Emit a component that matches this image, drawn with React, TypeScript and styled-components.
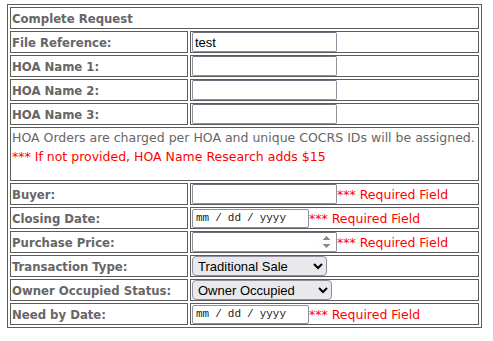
import React from 'react';
import styled, { createGlobalStyle, css } from 'styled-components';

const GlobalStyle = createGlobalStyle`
  body {
    margin: 4px 7px;
    background: #fff;
    font-family: "DejaVu Sans", Verdana, sans-serif;
  }
`;

const FormTable = styled.table`
  width: 475px;
  table-layout: fixed;
  border: 1px solid #5c5c5c;
  border-spacing: 2px;
  color: #666;
`;

const Cell = styled.td`
  border: 1px solid #5c5c5c;
  padding: 0 1px;
  height: 20px;
  vertical-align: middle;
`;

const Label = styled(Cell)`
  font-family: "DejaVu Sans Condensed", "DejaVu Sans", sans-serif;
  font-stretch: condensed;
  font-weight: bold;
  font-size: 13px;
  white-space: nowrap;
`;

const Note = styled(Cell)`
  height: auto;
  padding: 0 1px 14px;
  font-size: 12.5px;
  line-height: 19px;
  vertical-align: top;
  white-space: nowrap;
`;

const Field = styled.div`
  display: flex;
  align-items: center;
  height: 20px;
`;

const Required = styled.span`
  color: #f00;
  font-size: 12.5px;
  white-space: nowrap;
`;

const RedLine = styled.div`
  color: #f00;
`;

const control = css`
  box-sizing: border-box;
  margin: 0;
  font-family: "Liberation Sans", Arial, sans-serif;
  font-size: 13px;
  color: #000;
`;

const TextInput = styled.input`
  ${control};
  width: 145px;
  height: 20px;
  padding: 1px 2px;
  border: 1px solid #8f8f9d;
  border-top-color: #6e6e7a;
  border-radius: 2px;

  &::-webkit-inner-spin-button {
    opacity: 1;
  }
`;

const DateInput = styled.input`
  ${control};
  width: 117px;
  height: 19px;
  padding: 1px 2px;
  border: 1px solid #8f8f9d;
  border-radius: 2px;
  font-family: "Liberation Mono", "Courier New", monospace;
  font-size: 11px;
  color: #222;

  &::-webkit-datetime-edit-text {
    padding: 0 5px;
  }

  &::-webkit-calendar-picker-indicator {
    display: none;
  }
`;

const Select = styled.select<{ $width: number }>`
  ${control};
  width: ${p => p.$width}px;
  height: 20px;
  padding: 0 1px;
  background-color: #e9e9ed;
  border: 1px solid #8f8f9d;
  border-radius: 4px;
`;

const Req = () => <Required>*** Required Field</Required>;

export default function App() {
  return (
    <>
      <GlobalStyle />
      <FormTable>
        <colgroup>
          <col style={{ width: 178 }} />
          <col style={{ width: 289 }} />
        </colgroup>
        <tbody>
          <tr>
            <Label colSpan={2}>Complete Request</Label>
          </tr>
          <tr>
            <Label>File Reference:</Label>
            <Cell><Field><TextInput type="text" defaultValue="test" /></Field></Cell>
          </tr>
          <tr>
            <Label>HOA Name 1:</Label>
            <Cell><Field><TextInput type="text" /></Field></Cell>
          </tr>
          <tr>
            <Label>HOA Name 2:</Label>
            <Cell><Field><TextInput type="text" /></Field></Cell>
          </tr>
          <tr>
            <Label>HOA Name 3:</Label>
            <Cell><Field><TextInput type="text" /></Field></Cell>
          </tr>
          <tr>
            <Note colSpan={2}>
              <div>HOA Orders are charged per HOA and unique COCRS IDs will be assigned.</div>
              <RedLine>*** If not provided, HOA Name Research adds $15</RedLine>
            </Note>
          </tr>
          <tr>
            <Label>Buyer:</Label>
            <Cell><Field><TextInput type="text" /><Req /></Field></Cell>
          </tr>
          <tr>
            <Label>Closing Date:</Label>
            <Cell><Field><DateInput type="date" /><Req /></Field></Cell>
          </tr>
          <tr>
            <Label>Purchase Price:</Label>
            <Cell><Field><TextInput type="number" /><Req /></Field></Cell>
          </tr>
          <tr>
            <Label>Transaction Type:</Label>
            <Cell>
              <Field>
                <Select $width={135} defaultValue="Traditional Sale">
                  <option>Traditional Sale</option>
                  <option>Short Sale</option>
                  <option>REO</option>
                </Select>
              </Field>
            </Cell>
          </tr>
          <tr>
            <Label>Owner Occupied Status:</Label>
            <Cell>
              <Field>
                <Select $width={140} defaultValue="Owner Occupied">
                  <option>Owner Occupied</option>
                  <option>Non-Owner Occupied</option>
                </Select>
              </Field>
            </Cell>
          </tr>
          <tr>
            <Label>Need by Date:</Label>
            <Cell><Field><DateInput type="date" /><Req /></Field></Cell>
          </tr>
        </tbody>
      </FormTable>
    </>
  );
}
